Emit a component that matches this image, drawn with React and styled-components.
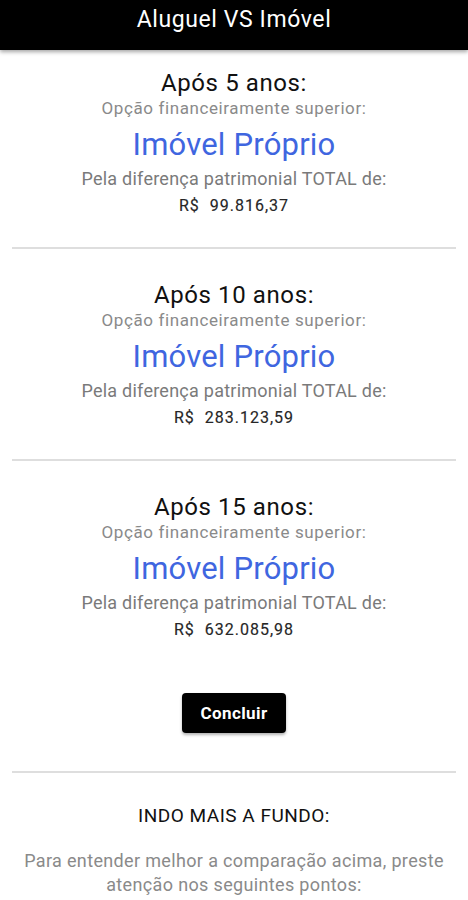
import React from "react";
import styled, { createGlobalStyle } from "styled-components";

const GlobalStyle = createGlobalStyle`
  body {
    margin: 0;
    background: #fff;
    font-family: Roboto, "Noto Sans", Arial, sans-serif;
  }
`;

const Page = styled.div`
  width: 468px;
  min-height: 900px;
  background: #fff;
`;

const Header = styled.header`
  height: 50px;
  background: #000;
  display: flex;
  justify-content: center;
  box-shadow: 0 2px 4px rgba(0, 0, 0, 0.35);
`;

const HeaderTitle = styled.h1`
  margin: 0;
  color: #fff;
  font-size: 23px;
  letter-spacing: 0.6px;
  font-weight: 400;
  line-height: 40px;
`;

const Result = styled.section`
  display: flex;
  flex-direction: column;
  align-items: center;
  padding: ${(p) => (p.first ? "20px" : "33px")} 0 30px;
`;

const Period = styled.div`
  font-size: 24px;
  letter-spacing: 0.6px;
  line-height: 26px;
  color: #111;
`;

const Label = styled.div`
  font-size: 17px;
  letter-spacing: 0.6px;
  line-height: 24px;
  color: #8a8a8a;
`;

const Winner = styled.div`
  margin-top: 7px;
  font-size: 31px;
  letter-spacing: 0.2px;
  line-height: 36px;
  color: #3f66e0;
`;

const Difference = styled.div`
  margin-top: 4px;
  font-size: 18px;
  letter-spacing: 0.25px;
  line-height: 24px;
  color: #7a7a7a;
`;

const Amount = styled.div`
  margin-top: 4px;
  font-size: 16px;
  letter-spacing: 1px;
  line-height: 22px;
  color: #262626;
  -webkit-text-stroke: 0.15px #262626;
  white-space: pre;
`;

const Divider = styled.hr`
  margin: 0 12px;
  border: none;
  border-top: 2px solid #dedede;
`;

const Actions = styled.div`
  display: flex;
  justify-content: center;
  padding: 22px 0 38px;
`;

const DoneButton = styled.button`
  width: 104px;
  height: 40px;
  border: none;
  border-radius: 4px;
  background: #000;
  color: #fff;
  font-family: Roboto, Arial, sans-serif;
  font-size: 17px;
  letter-spacing: 0.4px;
  font-weight: 700;
  box-shadow: 0 2px 3px rgba(0, 0, 0, 0.3);
  cursor: pointer;
`;

const Deeper = styled.section`
  display: flex;
  flex-direction: column;
  align-items: center;
  padding: 31px 12px 0;
  text-align: center;
`;

const DeeperTitle = styled.h2`
  margin: 0;
  font-size: 19px;
  letter-spacing: 0.5px;
  line-height: 24px;
  font-weight: 400;
  color: #111;
`;

const DeeperText = styled.p`
  margin: 21px 0 0;
  font-size: 18px;
  letter-spacing: 0.35px;
  line-height: 24px;
  color: #8a8a8a;
`;

const results = [
  { years: 5, value: "99.816,37" },
  { years: 10, value: "283.123,59" },
  { years: 15, value: "632.085,98" },
];

const App = () => {
  return (
    <Page>
      <GlobalStyle />
      <Header>
        <HeaderTitle>Aluguel VS Imóvel</HeaderTitle>
      </Header>
      {results.map((r, i) => (
        <React.Fragment key={r.years}>
          {i > 0 && <Divider />}
          <Result first={i === 0}>
            <Period>Após {r.years} anos:</Period>
            <Label>Opção financeiramente superior:</Label>
            <Winner>Imóvel Próprio</Winner>
            <Difference>Pela diferença patrimonial TOTAL de:</Difference>
            <Amount>{"R$  " + r.value}</Amount>
          </Result>
        </React.Fragment>
      ))}
      <Actions>
        <DoneButton>Concluir</DoneButton>
      </Actions>
      <Divider />
      <Deeper>
        <DeeperTitle>INDO MAIS A FUNDO:</DeeperTitle>
        <DeeperText>
          Para entender melhor a comparação acima, preste
          <br />
          atenção nos seguintes pontos:
        </DeeperText>
      </Deeper>
    </Page>
  );
};

export default App;
